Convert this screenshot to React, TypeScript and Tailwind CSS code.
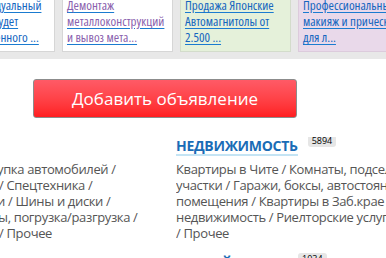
const cards = [
  { lines: ["Индивидуальный", "платье будет", "выполненного ..."], bg: "bg-white", border: "border-[#d6d6d6]", visited: false, pad: "pl-[14px] pr-[4px]" },
  { lines: ["Демонтаж", "металлоконструкций", "и вывоз мета..."], bg: "bg-white", border: "border-[#d6d6d6]", visited: true, pad: "px-[4px]" },
  { lines: ["Продажа Японские", "Автомагнитолы от", "2.500 ..."], bg: "bg-[#e5f1da]", border: "border-[#d3dccb]", visited: false, pad: "px-[4px]" },
  { lines: ["Профессиональный", "макияж и прическа", "для л..."], bg: "bg-[#e9d9ea]", border: "border-[#dccbdc]", visited: false, pad: "px-[4px]" },
];

const leftLines = [
  { text: "упка автомобилей /", shift: "-ml-[3px]" },
  { text: "/ Спецтехника /", shift: "-ml-[1px]" },
  { text: "и / Шины и диски /", shift: "-ml-[3px]" },
  { text: "ы, погрузка/разгрузка /", shift: "-ml-[2px]" },
  { text: "/ Прочее", shift: "-ml-[1px]" },
];

const estateLines = [
  "Квартиры в Чите / Комнаты, подселения / Дома,",
  "участки / Гаражи, боксы, автостоянки / Коммерческие",
  "помещения / Квартиры в Заб.крае / Зарубежная",
  "недвижимость / Риелторские услуги / Аренда",
  "/ Прочее",
];

function Card({ lines, bg, border, visited, pad }: (typeof cards)[number]) {
  return (
    <div className={`w-[111px] shrink-0 overflow-hidden border ${border} ${bg} ${pad} pb-[6px] pt-1`}>
      {lines.map((line) => (
        <a
          key={line}
          href="#"
          className={`block whitespace-nowrap text-[13px] leading-[16px] underline decoration-[#1a7bd0] underline-offset-2 font-stretch-[86%] ${
            visited ? "text-[#8a5fae]" : "text-[#1466bf]"
          }`}
        >
          {line}
        </a>
      ))}
    </div>
  );
}

function Category({ title, count }: { title: string; count: number }) {
  return (
    <div className="flex items-start gap-[10px]">
      <a
        href="#"
        className="border-b-2 border-[#c4e4f4] text-[14px] font-bold leading-[17px] tracking-[-0.3px] text-[#1a6cb6] font-stretch-normal"
      >
        {title}
      </a>
      <span className="mt-[-2px] rounded-[3px] bg-[#e6e6e6] px-1 text-[9px] leading-[12px] tracking-normal text-black font-stretch-normal">
        {count}
      </span>
    </div>
  );
}

export default function App() {
  return (
    <div className="h-[258px] w-[386px] overflow-hidden bg-white font-['Open_Sans',sans-serif]">
      <div className="flex h-[59px] items-end overflow-hidden bg-[#e8e8e8] pb-[7px]">
        <div className="-ml-[56px] flex gap-[7px]">
          {cards.map((c) => (
            <Card key={c.lines[0]} {...c} />
          ))}
        </div>
      </div>

      <div className="ml-[33px] mt-[20px] flex h-[39px] w-[264px] items-center justify-center rounded-[3px] border border-[#8c8c8c] bg-gradient-to-b from-[#ff5a66] to-[#ff1c1f] text-[17px] text-white">
        Добавить объявление
      </div>

      <div className="mt-[19px] grid grid-cols-[160px_1fr] gap-4 text-[13px] leading-[16px] tracking-[-0.35px] text-[#555] font-stretch-[93%]">
        <div className="overflow-hidden pt-[24px]">
          {leftLines.map((l) => (
            <div key={l.text} className={`whitespace-nowrap ${l.shift}`}>
              {l.text}
            </div>
          ))}
        </div>
        <div className="overflow-hidden">
          <Category title="НЕДВИЖИМОСТЬ" count={5894} />
          <div className="mt-[5px]">
            {estateLines.map((line) => (
              <div key={line} className="whitespace-nowrap">
                {line}
              </div>
            ))}
          </div>
          <div className="mt-[14px]">
            <Category title="ЖИЛОЙ СЕКТОР" count={1034} />
          </div>
        </div>
      </div>
    </div>
  );
}
